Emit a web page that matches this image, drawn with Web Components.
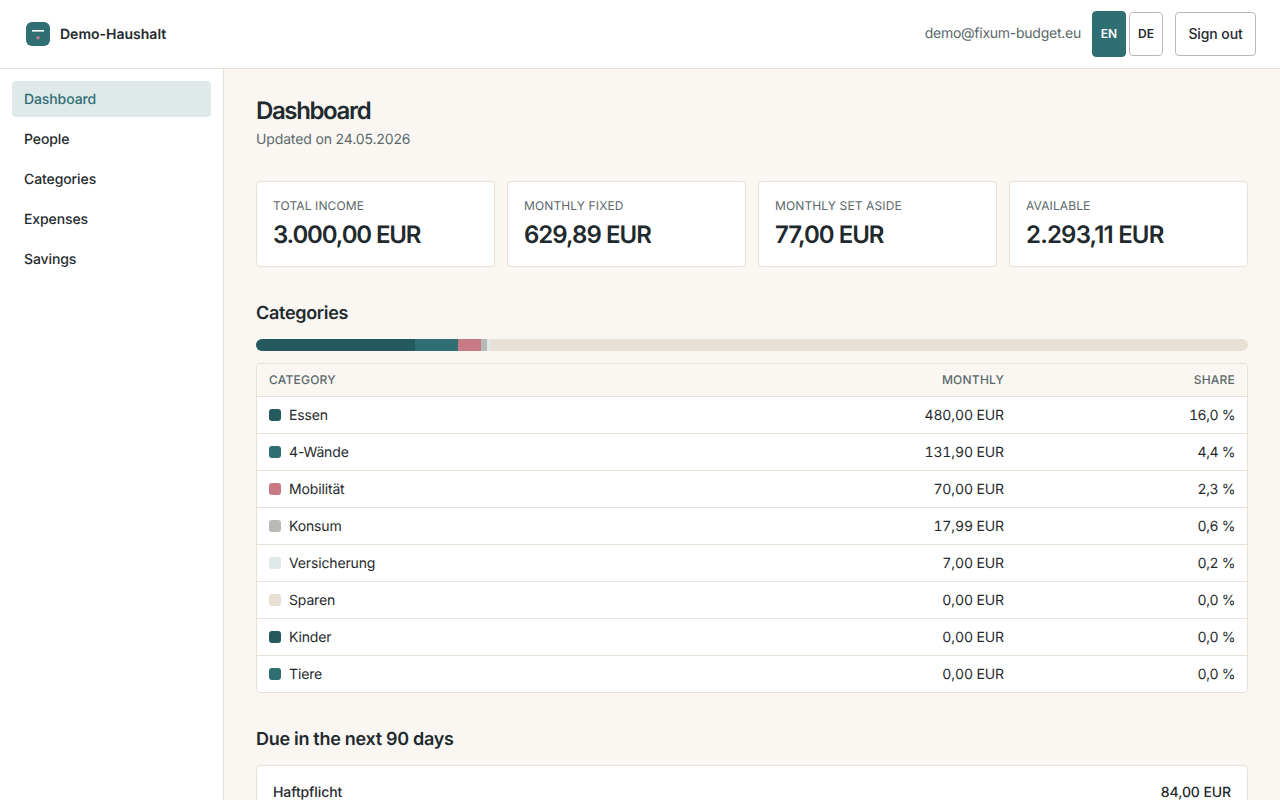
<!DOCTYPE html>
<html lang="en">
<head>
<meta charset="utf-8">
<title>Dashboard</title>
<style>
html,body{margin:0;padding:0;height:100%;overflow:hidden}
body{font-family:Inter,"Liberation Sans",sans-serif;color:#1f2a2e;background:#faf7f2;-webkit-font-smoothing:antialiased;text-rendering:geometricPrecision}
</style>
</head>
<body>
<app-shell>
  <app-header slot="header" email="demo@fixum-budget.eu" name="Demo-Haushalt"></app-header>
  <app-sidebar slot="sidebar">
    <nav-item active>Dashboard</nav-item>
    <nav-item>People</nav-item>
    <nav-item>Categories</nav-item>
    <nav-item>Expenses</nav-item>
    <nav-item>Savings</nav-item>
  </app-sidebar>
  <page-title heading="Dashboard" sub="Updated on 24.05.2026"></page-title>
  <stat-grid>
    <stat-card label="Total income" value="3.000,00 EUR" style="--ls:-1.15px"></stat-card>
    <stat-card label="Monthly fixed" value="629,89 EUR" style="--ls:-.98px"></stat-card>
    <stat-card label="Monthly set aside" value="77,00 EUR" style="--ls:-1.03px"></stat-card>
    <stat-card label="Available" value="2.293,11 EUR" style="--ls:-.82px"></stat-card>
  </stat-grid>
  <section-title style="margin-top:32px">Categories</section-title>
  <share-bar></share-bar>
  <cat-table>
    <cat-row head name="Category" monthly="Monthly" share="Share"></cat-row>
    <cat-row color="#245a5e" name="Essen" monthly="480,00 EUR" share="16,0 %"></cat-row>
    <cat-row color="#2f6e73" name="4-Wände" monthly="131,90 EUR" share="4,4 %"></cat-row>
    <cat-row color="#c77a84" name="Mobilität" monthly="70,00 EUR" share="2,3 %"></cat-row>
    <cat-row color="#b9b9b5" name="Konsum" monthly="17,99 EUR" share="0,6 %"></cat-row>
    <cat-row color="#dfe9ea" name="Versicherung" monthly="7,00 EUR" share="0,2 %"></cat-row>
    <cat-row color="#e8e0d4" name="Sparen" monthly="0,00 EUR" share="0,0 %"></cat-row>
    <cat-row color="#245a5e" name="Kinder" monthly="0,00 EUR" share="0,0 %"></cat-row>
    <cat-row color="#2f6e73" name="Tiere" monthly="0,00 EUR" share="0,0 %"></cat-row>
  </cat-table>
  <section-title style="margin-top:32px">Due in the next 90 days</section-title>
  <due-card name="Haftpflicht" amount="84,00 EUR"></due-card>
</app-shell>
<script>
function def(name, css, html){
  customElements.define(name, class extends HTMLElement{
    connectedCallback(){
      if(this.shadowRoot) return;
      const r=this.attachShadow({mode:'open'});
      const a=k=>this.getAttribute(k)||'';
      r.innerHTML='<style>'+css+'</style>'+(typeof html==='function'?html(a,this):html);
    }
  });
}
def('app-shell',`
  :host{display:grid;grid-template-columns:224px minmax(0,1fr);grid-template-rows:69px minmax(0,1fr);height:100vh;overflow:hidden}
  .h{grid-column:1/3}
  main{padding:32px;overflow:hidden}
`,`<div class="h"><slot name="header"></slot></div><slot name="sidebar"></slot><main><slot></slot></main>`);
def('app-header',`
  :host{display:flex;align-items:center;height:68px;background:#fff;border-bottom:1px solid #e8e0d4;padding:0 24px 0 26px}
  .brand{display:flex;align-items:center;gap:10px;font-size:14px;font-weight:600;color:#1f2a2e}
  svg{display:block}
  .right{margin-left:auto;display:flex;align-items:center}
  .mail{font-size:14px;color:#5a686c;margin-right:11px;padding-bottom:2px;letter-spacing:-.25px}
  .lang{display:flex;align-items:center;gap:3px;margin-right:12px}
  button{font:inherit;box-sizing:border-box;border-radius:4px;cursor:pointer;background:#fff;color:#1f2a2e;border:1px solid #b9b9b5;padding:0 0 2px}
  .l{width:34px;height:44px;font-size:12px;font-weight:600}
  .l.on{height:46px;background:#2f6e73;border-color:#2f6e73;color:#fff}
  .out{width:81px;height:44px;font-size:14px;font-weight:500;letter-spacing:-.1px}
`,a=>`<div class="brand"><svg width="24" height="24" viewBox="0 0 24 24"><rect width="24" height="24" rx="6" fill="#2f6e73"/><rect x="6" y="8" width="12" height="1.6" fill="#fff"/><circle cx="12" cy="15.7" r="1.7" fill="#c77a84"/></svg><span>${a('name')}</span></div>
<div class="right"><span class="mail">${a('email')}</span><div class="lang"><button class="l on">EN</button><button class="l">DE</button></div><button class="out">Sign out</button></div>`);
def('app-sidebar',`
  :host{display:flex;flex-direction:column;gap:4px;background:#fff;border-right:1px solid #e8e0d4;padding:12px;box-sizing:border-box;width:224px}
`,`<slot></slot>`);
def('nav-item',`
  :host{display:flex;align-items:center;box-sizing:border-box;height:36px;padding:0 12px;border-radius:4px;font-size:14px;font-weight:500;color:#1f2a2e;letter-spacing:-.1px}
  :host([active]){background:#dfe9ea;color:#2f6e73}
`,`<slot></slot>`);
def('page-title',`
  :host{display:block;margin-bottom:31px}
  h1{margin:1px 0 0;font-size:24px;line-height:18px;font-weight:600;letter-spacing:-1.37px;color:#1f2a2e;height:18px}
  p{margin:10px 0 0;font-size:14px;line-height:20px;color:#5a686c;letter-spacing:-.14px}
`,a=>`<h1>${a('heading')}</h1><p>${a('sub')}</p>`);
def('stat-grid',`:host{display:grid;grid-template-columns:repeat(4,minmax(0,1fr));gap:12px}`,`<slot></slot>`);
def('stat-card',`
  :host{display:block;box-sizing:border-box;height:86px;background:#fff;border:1px solid #e8e0d4;border-radius:4px;padding:16px}
  .l{font-size:12px;line-height:16px;letter-spacing:.12px;text-transform:uppercase;color:#5a686c}
  .v{font-size:24px;line-height:32px;font-weight:600;letter-spacing:var(--ls,0);color:#1f2a2e;margin-top:5px}
`,a=>`<div class="l">${a('label')}</div><div class="v">${a('value')}</div>`);
def('section-title',`:host{display:block;box-sizing:border-box;height:28px;padding-top:1px;font-size:18px;line-height:28px;font-weight:600;letter-spacing:-.3px;color:#1f2a2e}`,`<slot></slot>`);
def('share-bar',`
  :host{display:flex;height:12px;border-radius:6px;overflow:hidden;background:#e8e0d4;margin:12px 0}
  i{display:block}
`,`<i style="width:16%;background:#245a5e"></i><i style="width:4.4%;background:#2f6e73"></i><i style="width:2.33%;background:#c77a84"></i><i style="width:.6%;background:#b9b9b5"></i><i style="width:.23%;background:#dfe9ea"></i>`);
def('cat-table',`:host{display:block;background:#fff;border:1px solid #e8e0d4;border-radius:4px;overflow:hidden}`,`<slot></slot>`);
def('cat-row',`
  :host{display:grid;grid-template-columns:minmax(0,1fr) 200px 231px;align-items:center;height:37px;box-sizing:border-box;border-top:1px solid #e8e0d4;font-size:14px;color:#1f2a2e}
  :host(:first-child){border-top:0;height:32px;padding-bottom:2px}
  :host([head]){background:#faf7f2;font-size:12px;font-weight:500;text-transform:uppercase;color:#5a686c}
  :host([head]) div{letter-spacing:.22px;font-variant-numeric:normal}
  div{padding:0 12px}
  .n{display:flex;align-items:center;gap:8px;letter-spacing:-.15px}
  .r{text-align:right;font-variant-numeric:tabular-nums;letter-spacing:-.12px}
  .s{letter-spacing:-.4px}
  b{width:12px;height:12px;border-radius:3px;display:block}
`,(a,el)=>`<div class="n">${el.hasAttribute('head')?'':`<b style="background:${a('color')}"></b>`}<span>${a('name')}</span></div><div class="r">${a('monthly')}</div><div class="r s">${a('share')}</div>`);
def('due-card',`
  :host{display:flex;justify-content:space-between;background:#fff;border:1px solid #e8e0d4;border-radius:4px;padding:17px 16px 15px;margin-top:12px;font-size:14px;line-height:20px;font-weight:500;color:#1f2a2e;letter-spacing:-.1px}
`,a=>`<span>${a('name')}</span><span>${a('amount')}</span>`);
</script>
</body>
</html>
